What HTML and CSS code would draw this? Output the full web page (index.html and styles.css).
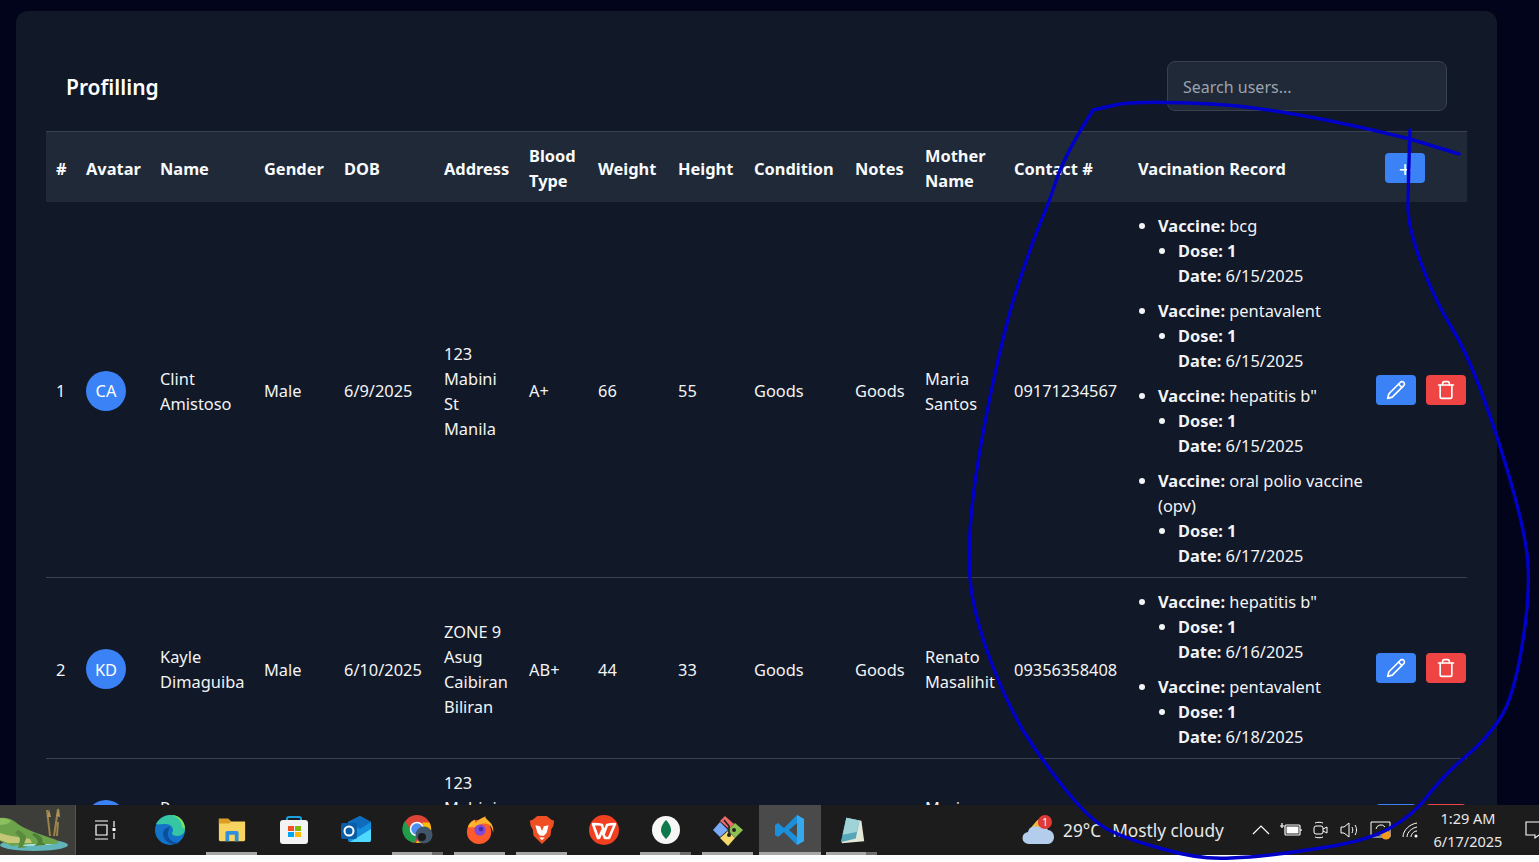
FILE: index.html
```html
<!DOCTYPE html>
<html lang="en">
<head>
<meta charset="utf-8">
<title>Profilling</title>
<link rel="stylesheet" href="styles.css">
</head>
<body>
<div class="screen">
  <main class="viewport">
    <section class="card">
      <header class="card-head">
        <h1 class="title">Profilling</h1>
        <input class="search" type="text" placeholder="Search users...">
      </header>
      <table class="table">
        <colgroup>
          <col class="c1"><col class="c2"><col class="c3"><col class="c4"><col class="c5"><col class="c6"><col class="c7"><col class="c8"><col class="c9"><col class="c10"><col class="c11"><col class="c12"><col class="c13"><col class="c14"><col class="c15">
        </colgroup>
        <thead>
          <tr>
            <th>#</th><th>Avatar</th><th>Name</th><th>Gender</th><th>DOB</th><th>Address</th><th>Blood Type</th><th>Weight</th><th>Height</th><th>Condition</th><th>Notes</th><th>Mother Name</th><th>Contact #</th><th>Vacination Record</th>
            <th><button class="btn btn-blue btn-add" type="button">+</button></th>
          </tr>
        </thead>
        <tbody>
          <tr>
            <td>1</td><td><span class="avatar">CA</span></td><td>Clint Amistoso</td><td>Male</td><td>6/9/2025</td><td>123 Mabini St Manila</td><td>A+</td><td>66</td><td>55</td><td>Goods</td><td>Goods</td><td>Maria Santos</td><td>09171234567</td>
            <td class="vax">
              <ul class="vax-list">
                <li><b>Vaccine:</b> bcg<ul><li><b>Dose: 1</b><br><b>Date:</b> 6/15/2025</li></ul></li>
                <li><b>Vaccine:</b> pentavalent<ul><li><b>Dose: 1</b><br><b>Date:</b> 6/15/2025</li></ul></li>
                <li><b>Vaccine:</b> hepatitis b"<ul><li><b>Dose: 1</b><br><b>Date:</b> 6/15/2025</li></ul></li>
                <li><b>Vaccine:</b> oral polio vaccine (opv)<ul><li><b>Dose: 1</b><br><b>Date:</b> 6/17/2025</li></ul></li>
              </ul>
            </td>
            <td class="actions"><div class="action-row">
              <button class="btn btn-blue" type="button"><svg viewBox="0 0 24 24" class="ico"><path d="M17 3a2.85 2.85 0 1 1 4 4L7.5 20.5 2 22l1.5-5.5Z"/><path d="m15 5 4 4"/></svg></button>
              <button class="btn btn-red" type="button"><svg viewBox="0 0 24 24" class="ico"><path d="M3 6h18"/><path d="M19 6v14a2 2 0 0 1-2 2H7a2 2 0 0 1-2-2V6"/><path d="M8 6V4a2 2 0 0 1 2-2h4a2 2 0 0 1 2 2v2"/></svg></button>
            </div></td>
          </tr>
          <tr>
            <td>2</td><td><span class="avatar">KD</span></td><td>Kayle Dimaguiba</td><td>Male</td><td>6/10/2025</td><td>ZONE 9 Asug Caibiran Biliran</td><td>AB+</td><td>44</td><td>33</td><td>Goods</td><td>Goods</td><td>Renato Masalihit</td><td>09356358408</td>
            <td class="vax">
              <ul class="vax-list">
                <li><b>Vaccine:</b> hepatitis b"<ul><li><b>Dose: 1</b><br><b>Date:</b> 6/16/2025</li></ul></li>
                <li><b>Vaccine:</b> pentavalent<ul><li><b>Dose: 1</b><br><b>Date:</b> 6/18/2025</li></ul></li>
              </ul>
            </td>
            <td class="actions"><div class="action-row">
              <button class="btn btn-blue" type="button"><svg viewBox="0 0 24 24" class="ico"><path d="M17 3a2.85 2.85 0 1 1 4 4L7.5 20.5 2 22l1.5-5.5Z"/><path d="m15 5 4 4"/></svg></button>
              <button class="btn btn-red" type="button"><svg viewBox="0 0 24 24" class="ico"><path d="M3 6h18"/><path d="M19 6v14a2 2 0 0 1-2 2H7a2 2 0 0 1-2-2V6"/><path d="M8 6V4a2 2 0 0 1 2-2h4a2 2 0 0 1 2 2v2"/></svg></button>
            </div></td>
          </tr>
          <tr>
            <td>3</td><td><span class="avatar">RB</span></td><td>Ryan Bautista</td><td>Male</td><td>6/11/2025</td><td>123 Mabini St Manila</td><td>O+</td><td>50</td><td>40</td><td>Goods</td><td>Goods</td><td>Maria Santos</td><td>09171234567</td>
            <td class="vax"></td>
            <td class="actions"><div class="action-row">
              <button class="btn btn-blue" type="button"><svg viewBox="0 0 24 24" class="ico"><path d="M17 3a2.85 2.85 0 1 1 4 4L7.5 20.5 2 22l1.5-5.5Z"/><path d="m15 5 4 4"/></svg></button>
              <button class="btn btn-red" type="button"><svg viewBox="0 0 24 24" class="ico"><path d="M3 6h18"/><path d="M19 6v14a2 2 0 0 1-2 2H7a2 2 0 0 1-2-2V6"/><path d="M8 6V4a2 2 0 0 1 2-2h4a2 2 0 0 1 2 2v2"/></svg></button>
            </div></td>
          </tr>
        </tbody>
      </table>
    </section>
  </main>
  <footer class="taskbar">
    <div class="thumb">
      <svg viewBox="0 0 75 50" width="75" height="50"><rect width="75" height="50" fill="#3d3e3a"/><ellipse cx="34" cy="40" rx="34" ry="6" fill="#62b4bb"/><ellipse cx="30" cy="38" rx="24" ry="3" fill="#a7dbd6"/><path d="M50 31l-3-26M54 31l4-27M57 31l1-14" stroke="#9a8248" stroke-width="2" fill="none"/><path d="M47 12l2-8 2 8ZM56 11l3-8 1 9Z" fill="#b3925a"/><path d="M0 13c7-1 12 1 18 6 8 6 24 11 36 15 5 2 6 4 2 5H30L12 41 0 36Z" fill="#6da34a"/><path d="M0 13c5 0 9 1 11 3-3 3-7 4-11 4Z" fill="#8cbf5e"/><path d="M0 28c8 3 20 4 30 6l2 4H8L0 35Z" fill="#c3c777"/><path d="M18 25c4 2 8 4 8 9l-3 7 5 1-10 1 2-8c0-3-2-5-5-7Z" fill="#5a8b3c"/><path d="M34 28c6 2 10 5 8 9l4 3-12 1 4-3c0-4-3-6-6-8Z" fill="#4d7f36"/></svg>
    </div>
    <div class="task-icons">
      <span class="task task-plain"><svg viewBox="0 0 24 24" width="24" height="24" fill="none" stroke="#fff" stroke-width="1.2"><path d="M1 3h13M1 21h13M2 7h11v10H2zM20 3v6M20 15v6"/><rect x="18.500" y="10" width="3" height="3" fill="#fff" stroke="none"/></svg></span>
      <span class="task"><svg viewBox="0 0 32 32" width="32" height="32"><circle cx="16" cy="16" r="15" fill="#1273c8"/><path d="M2 10C6 3 12 1 17 1c8 0 14 6 14 14 0 4-3 7-8 7-3 0-5-1-5-3 0-1 1-1 1-3 0-4-4-6-8-6-4 0-7 1-9 0Z" fill="#35c6a4"/><path d="M31 15c0-8-6-14-14-14 6 1 11 6 11 12l3 2Z" fill="#7be05f"/><path d="M16 13c-5 0-7 4-7 7 0 5 5 10 11 10 2 0 4 0 6-2-6 2-12-2-12-8 0-3 1-5 2-7Z" fill="#0c4f9c"/></svg></span>
      <span class="task task-on"><svg viewBox="0 0 32 32" width="30" height="30"><path d="M2 4h10l3 3h15v19a2 2 0 0 1-2 2H4a2 2 0 0 1-2-2Z" fill="#f7d35f"/><path d="M2 4h10l3 3-2 2H2Z" fill="#dc9d24"/><path d="M9 28v-9a2 2 0 0 1 2-2h10a2 2 0 0 1 2 2v9h-4v-7h-6v7Z" fill="#2f8fd8"/></svg></span>
      <span class="task"><svg viewBox="0 0 32 32" width="32" height="32"><path d="M9 9V5a2 2 0 0 1 2-2h10a2 2 0 0 1 2 2v4" fill="none" stroke="#1ba1e2" stroke-width="2"/><rect x="2" y="6" width="28" height="24" rx="3" fill="#f3f3f3"/><rect x="10" y="12" width="6" height="5" fill="#f25022"/><rect x="17" y="12" width="6" height="5" fill="#7fba00"/><rect x="10" y="18" width="6" height="5" fill="#00a4ef"/><rect x="17" y="18" width="6" height="5" fill="#ffb900"/></svg></span>
      <span class="task"><svg viewBox="0 0 32 32" width="32" height="32"><path d="M8 8l12-6 11 6v18a2 2 0 0 1-2 2H10a2 2 0 0 1-2-2Z" fill="#1490df"/><path d="M20 2l11 6-11 7-12-7Z" fill="#0f6cbd"/><path d="M10 28l21-13v11a2 2 0 0 1-2 2Z" fill="#50d9ff"/><rect x="1" y="9" width="16" height="16" rx="2" fill="#0a5ea8"/><circle cx="9" cy="17" r="4.500" fill="none" stroke="#fff" stroke-width="2"/></svg></span>
      <span class="task task-multi"><svg viewBox="0 0 32 32" width="32" height="32"><circle cx="15" cy="15" r="14" fill="#db4437"/><path d="M27.500 8.500A14 14 0 0 1 14 29l6-11a7 7 0 0 0 0-9.500Z" fill="#fbbc05"/><path d="M3 7l6 10a7 7 0 0 0 6 5l-3 7A14 14 0 0 1 3 7Z" fill="#1e9e4a"/><circle cx="15" cy="15" r="6.500" fill="#4d8ff0" stroke="#fff" stroke-width="1.500"/><circle cx="22" cy="21" r="8.500" fill="#41566b"/><circle cx="20" cy="23" r="4" fill="#1b1b1b"/></svg></span>
      <span class="task task-on"><svg viewBox="0 0 32 32" width="30" height="30"><circle cx="15" cy="18" r="13" fill="#ff5a2c"/><path d="M3 13C5 7 9 5 11 5c-1 2 0 3 1 3 3-4 9-6 10-7-1 2 1 3 3 5 4 3 6 8 5 13-1-8-6-10-9-10-6 0-9 3-9 4l-8 0Z" fill="#ffb32c"/><circle cx="16" cy="16" r="6" fill="#7d4bd8"/><circle cx="17" cy="15" r="2.500" fill="#4b2aa8"/></svg></span>
      <span class="task task-on"><svg viewBox="0 0 32 32" width="30" height="30"><path d="M6 5l5-4h10l5 4 3 1-1 6-2 3-1 7-9 9-9-9-1-7-2-3-1-6Z" fill="#f04e23"/><path d="M9 11l5 1 2 5 2-5 5-1-2 8-3 3h-4l-3-3ZM13 24h6l-3 3Z" fill="#fff"/></svg></span>
      <span class="task"><svg viewBox="0 0 32 32" width="32" height="32"><circle cx="16" cy="16" r="15" fill="#f0401f"/><path d="M5 10c4 0 7 0 9 1l2 8 3-8c3-1 6-1 8-1l-6 14h-4l-3-7-3 7H10Z" fill="none" stroke="#fff" stroke-width="2.600" stroke-linejoin="round"/></svg></span>
      <span class="task task-multi"><svg viewBox="0 0 32 32" width="32" height="32"><circle cx="16" cy="16" r="14" fill="#f7f7f5"/><path d="M16 6c4 4 5 8 5 10 0 4-3 7-5 9-2-2-5-5-5-9 0-2 1-6 5-10Z" fill="#0e7a4c"/></svg></span>
      <span class="task task-on"><svg viewBox="0 0 32 32" width="32" height="32"><path d="M16 16l7-7 8 7-8 8Z" fill="#8cc152"/><path d="M1 16l7-8 8 8-8 7Z" fill="#7aa9f7"/><path d="M8 24l8-7 7 7-7 8Z" fill="#f7d96b"/><path d="M8 7l5-5 9 8-5 5Z" fill="#ee6a6a"/><path d="M12 6l5 6v9" fill="none" stroke="#222" stroke-width="1.600"/><circle cx="17" cy="21" r="2" fill="#222"/><circle cx="22" cy="16" r="2" fill="#222"/></svg></span>
      <span class="task task-active"><svg viewBox="0 0 32 32" width="32" height="32"><path d="M23 1l7 4v22l-7 4-13-13-6 5-3-2v-10l3-2 6 5Z" fill="#1a8fdc"/><path d="M23 9l-8 7 8 7Z" fill="#4a4a4a"/><path d="M23 1l7 4v22l-7 4Z" fill="#36a9ee"/></svg></span>
      <span class="task task-multi"><svg viewBox="0 0 32 32" width="30" height="30"><path d="M10 3l16 3 3 22-24 2Z" fill="#e3e7d8"/><path d="M10 3l14 3-4 19-16 4Z" fill="#57a7b8"/><path d="M10 3l14 3-3 12-15 3Z" fill="#9ed3d8"/></svg></span>
    </div>
    <div class="tray">
      <span class="weather-ico">
        <svg viewBox="0 0 34 32" width="34" height="32"><path d="M10 14c2-3 5-7 8-9-1 4 0 8 2 9Z" fill="#f5b63b"/><path d="M8 30a6 6 0 0 1-1-12c1-5 6-7 10-5 2-2 8-2 10 3 3 0 6 3 6 7s-3 7-6 7Z" fill="#b5cdec"/><circle cx="24" cy="8" r="7" fill="#e03a37"/><text x="24" y="11.500" class="badge">1</text></svg>
      </span>
      <span class="weather"><span class="temp">29°C</span>Mostly cloudy</span>
      <span class="tray-icons">
        <svg viewBox="0 0 18 18" width="18" height="18" fill="none" stroke="#fff" stroke-width="1.200"><path d="M1 13l8-8 8 8"/></svg>
        <svg viewBox="0 0 22 18" width="22" height="18" fill="none" stroke="#fff" stroke-width="1.200"><rect x="5" y="4" width="15" height="10" rx="1"/><rect x="6.500" y="5.500" width="12" height="7" fill="#fff" stroke="none"/><path d="M21 8v2M0 5h4M2 2v5"/></svg>
        <svg viewBox="0 0 18 18" width="18" height="18" fill="none" stroke="#fff" stroke-width="1"><rect x="3" y="5" width="9" height="8" rx="2"/><path d="M12 8l4-2v6l-4-2M4 2c2-1 6-1 8 0M4 16c2 1 6 1 8 0"/></svg>
        <svg viewBox="0 0 22 18" width="22" height="18" fill="none" stroke="#fff" stroke-width="1"><path d="M2 6h3l5-4v14l-5-4H2Z M13 6c1 2 1 4 0 6M16 4c2 3 2 7 0 10"/></svg>
        <span class="tray-badge"><svg viewBox="0 0 22 20" width="22" height="20" fill="none" stroke="#fff" stroke-width="1"><path d="M1 2h19v15H1Z M6 9a5 5 0 0 1 9-2M16 11a5 5 0 0 1-9 2"/><circle cx="16" cy="15" r="4.500" fill="#f59a1b" stroke="none"/></svg></span>
        <svg viewBox="0 0 20 18" width="20" height="18" fill="none" stroke="#fff" stroke-width="1"><path d="M1 16C1 9 8 3 15 2M5 16c0-5 5-9 10-10M9 16c0-3 3-6 6-6"/><circle cx="14" cy="15" r="1.500" fill="#fff" stroke="none"/></svg>
      </span>
      <span class="clock"><span>1:29 AM</span><span>6/17/2025</span></span>
      <span class="notif"><svg viewBox="0 0 20 20" width="20" height="20" fill="none" stroke="#fff" stroke-width="1.100"><path d="M1 2h18v13h-5l-4 3v-3H1Z"/></svg></span>
    </div>
  </footer>
  <div class="bottom-strip"></div>
  <svg class="ink" viewBox="0 0 1539 862" width="1539" height="862"><path d="M1459 154L1410 139Q1285 108 1211 104Q1137 100 1115 105L1093 110L1082 128Q1063 160 1056 181Q1049 203 1037 231Q1026 260 1013 301Q1001 343 988 407Q975 472 971 517Q967 562 972 595Q978 629 993 667Q1008 705 1024 732Q1041 759 1065 789Q1089 819 1107 829Q1126 839 1163 849Q1200 860 1231 858Q1263 857 1314 849Q1366 842 1390 828Q1414 815 1430 793Q1447 772 1465 757Q1484 742 1499 720Q1514 699 1523 640Q1532 582 1526 547Q1521 512 1497 437Q1473 363 1453 330Q1433 297 1421 263Q1409 230 1408 210Q1408 190 1410 130" fill="none" stroke="#0000c8" stroke-width="3.400" stroke-linecap="round" stroke-linejoin="round"/></svg>
</div>
</body>
</html>
```
FILE: styles.css
```css
* { box-sizing: border-box; }
html, body { margin: 0; padding: 0; height: 862px; overflow: hidden; background: #fff; }
body { font-family: "Noto Sans", "Open Sans", sans-serif; font-size: 16.4px; line-height: 25px; color: #f3f4f6; }
.screen { position: relative; width: 1539px; height: 862px; display: flex; flex-direction: column; overflow: hidden; }
.viewport { height: 805px; flex: none; overflow: hidden; background: #01041a; padding: 11px 42px 0 16px; }
.card { background: #111827; border-radius: 12px; padding: 30px 30px 24px; min-height: 1000px; }
.card-head { display: flex; justify-content: space-between; align-items: center; padding: 20px; height: 90px; }
.title { margin: 0; font-size: 21px; font-weight: 600; line-height: 30px; color: #fff; position: relative; top: 1px; }
.search { width: 280px; height: 50px; padding: 2px 15px 0; border: 1px solid #374151; border-radius: 8px; background: #1f2937; color: #fff; font: inherit; font-size: 16px; outline: none; }
.search::placeholder { color: #9ca3af; opacity: 1; }
.table { width: 1421px; table-layout: fixed; border-collapse: collapse; }
.c1 { width: 30px; } .c2 { width: 74px; } .c3 { width: 104px; } .c4 { width: 80px; } .c5 { width: 100px; }
.c6 { width: 85px; } .c7 { width: 69px; } .c8 { width: 80px; } .c9 { width: 76px; } .c10 { width: 101px; }
.c11 { width: 70px; } .c12 { width: 89px; } .c13 { width: 124px; } .c14 { width: 247px; } .c15 { width: 92px; }
th { background: #1f2937; border-top: 1px solid #374151; text-align: left; font-weight: 700; color: #f9fafb; padding: 11px 10px 9px; }
td { padding: 11px 10px 9px; color: #f3f4f6; vertical-align: middle; border-bottom: 1px solid #374151; }
td.vax { padding: 11px 6px 0 10px; }
td.actions { padding: 0 1px; }
.action-row { display: flex; gap: 10px; }
.avatar { display: flex; width: 40px; height: 40px; border-radius: 50%; background: #3b82f6; align-items: center; justify-content: center; color: #fff; }
.btn { width: 40px; height: 30px; border: 0; border-radius: 4px; padding: 0; display: flex; align-items: center; justify-content: center; color: #fff; font: inherit; }
.btn-blue { background: #3b82f6; }
.btn-red { background: #ef4444; }
.btn-add { font-size: 22px; font-weight: 400; }
.ico { width: 20px; height: 20px; fill: none; stroke: #fff; stroke-width: 2; stroke-linecap: round; stroke-linejoin: round; }
.vax-list { margin: 0; padding: 0 0 0 20px; list-style: disc; }
.vax-list > li { margin-bottom: 10px; }
.vax-list > li:last-child { margin-bottom: 9px; }
.vax-list ul { margin: 0; padding-left: 20px; list-style: disc; }
b { font-weight: 700; }
.taskbar { height: 50px; flex: none; display: flex; align-items: stretch; background: #1c1c1c; color: #fff; }
.thumb { width: 76px; height: 50px; border-right: 1px solid #555; overflow: hidden; }
.task-icons { display: flex; }
.task { width: 62px; display: flex; align-items: center; justify-content: center; position: relative; }
.task-plain { width: 60px; margin-right: 3px; }
.task-on::after, .task-multi::after, .task-active::after { content: ""; position: absolute; left: 5px; right: 6px; bottom: 0; height: 3px; background: #a6a6a6; }
.task-multi::after { background: linear-gradient(90deg, #a6a6a6 78%, #6e6e6e 78%); }
.task-active { background: #4a4a4a; }
.task-active::after { left: 0; right: 0; }
.tray { margin-left: auto; display: flex; align-items: center; }
.weather-ico { display: flex; width: 34px; margin-right: 8px; }
.badge { fill: #fff; font-size: 10px; text-anchor: middle; }
.weather { font-size: 17.300px; width: 189px; color: #e8e8e8; white-space: nowrap; }
.temp { margin-right: 11px; }
.tray-icons { display: flex; align-items: center; gap: 9.600px; }
.tray-badge { display: flex; }
.clock { display: flex; flex-direction: column; align-items: center; width: 92px; font-size: 14.500px; line-height: 23px; color: #e8e8e8; }
.notif { width: 14px; margin-left: 11px; display: flex; overflow: hidden; }
.notif svg { flex: none; }
.bottom-strip { height: 7px; flex: none; background: #fff; }
.ink { position: absolute; left: 0; top: 0; pointer-events: none; }
```
